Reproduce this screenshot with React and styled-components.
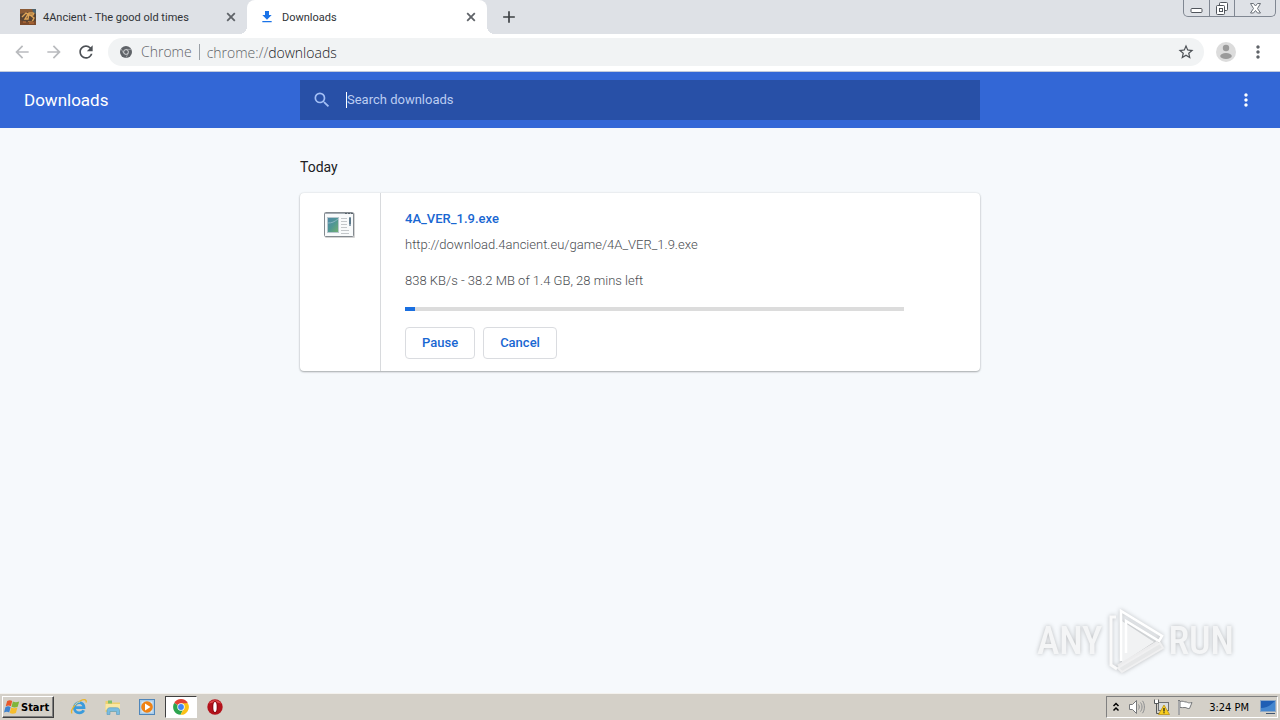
import React from "react";
import styled, { createGlobalStyle } from "styled-components";
import {
  MdAdd,
  MdArrowBack,
  MdArrowForward,
  MdFileDownload,
  MdMoreVert,
  MdRefresh,
  MdSearch,
  MdStarBorder,
} from "react-icons/md";

const download = {
  name: "4A_VER_1.9.exe",
  url: "http://download.4ancient.eu/game/4A_VER_1.9.exe",
  status: "838 KB/s - 38.2 MB of 1.4 GB, 28 mins left",
  percent: 2,
};

const GameFavicon = () => (
  <svg width="16" height="16" viewBox="0 0 16 16" aria-hidden="true">
    <rect width="16" height="16" fill="#5a4433" />
    <path d="M0 0h16v4L9 3 0 5z" fill="#8b5a35" />
    <path d="M2 8l4-4 2 1-3 5h3l1-6h5l-1 2h-3l4 3-2 4H8" stroke="#e0a557" strokeWidth="1.4" fill="none" />
    <path d="M0 11l5 2 11-1v4H0z" fill="#7c4b2b" />
    <path d="M3 13h3M9 14h5" stroke="#c9763a" />
    <path d="M12 0h4v5l-3-2z" fill="#4c6470" />
  </svg>
);

const CloseIcon = () => (
  <svg width="10" height="10" viewBox="0 0 10 10" aria-hidden="true">
    <path d="M1.2 1.2l7.600 7.600M8.800 1.200L1.200 8.800" stroke="currentColor" strokeWidth="1.800" />
  </svg>
);

const ChromeMono = () => (
  <svg width="12" height="12" viewBox="0 0 12 12" aria-hidden="true">
    <circle cx="6" cy="6" r="6" fill="#5f6368" />
    <circle cx="6" cy="6" r="2.4" fill="#5f6368" stroke="#f1f3f4" strokeWidth="0.8" />
    <path d="M6 3.400h5.200M3.700 7.300L1.200 3M8.300 7.300L5.900 11.800" stroke="#d5d7d9" strokeWidth="0.500" />
  </svg>
);

const ChromeColor = () => (
  <svg width="16" height="16" viewBox="0 0 16 16" aria-hidden="true">
    <path d="M8 8L1.2 4A7.8 7.8 0 0 1 14.8 4z" fill="#e24234" />
    <path d="M8 8L1.2 4A7.8 7.8 0 0 0 7.6 15.8L11 9z" fill="#2da44e" />
    <path d="M8 4.3h6.9A7.8 7.8 0 0 1 7.6 15.8L11 9z" fill="#fbc116" />
    <circle cx="8" cy="8" r="3.7" fill="#fff" />
    <circle cx="8" cy="8" r="2.9" fill="#4285f4" />
  </svg>
);

const ProgramIcon = () => (
  <svg width="32" height="28" viewBox="0 0 32 28" aria-hidden="true">
    <defs>
      <linearGradient id="thumb" x1="0" y1="0" x2="1" y2="1">
        <stop offset="0" stopColor="#4f86a8" />
        <stop offset="0.5" stopColor="#4f9794" />
        <stop offset="1" stopColor="#74b06c" />
      </linearGradient>
    </defs>
    <rect x="1" y="1" width="30" height="25" rx="1" fill="#d4d4d4" />
    <rect x="0.500" y="0.500" width="29" height="24" rx="1" fill="#f8fafb" stroke="#848a90" />
    <path d="M1 1.500h28" stroke="#a3abb2" />
    <path d="M21 1.500h2M24 1.500h2M27 1.500h2" stroke="#59636c" />
    <rect x="3.500" y="5.500" width="11" height="15" fill="url(#thumb)" stroke="#b8c8cf" />
    <path d="M4 11c4 0 6-1 10-4" stroke="#8bb6c2" fill="none" />
    <path d="M17 6.500h6M17 9.500h6M17 12.500h6M17 15.500h6M17 18.500h8M17 21.500h8" stroke="#c3c7ca" />
    <rect x="25" y="5" width="2" height="9" fill="#8fa3b1" />
    <path d="M26 6v6" stroke="#2d5268" />
  </svg>
);

const WindowsFlag = () => (
  <svg width="16" height="16" viewBox="0 0 16 16" aria-hidden="true">
    <path d="M3.200 2c2-1.200 3.500-1 5 0L6.900 7.300c-1.500-1-3.200-1-5.200 0z" fill="#e8582a" />
    <path d="M8.900 2.500c2 1 3.800 1 6.300 0l-1.500 5.200c-2 1-4.200 1-6.200 0z" fill="#7fb53a" />
    <path d="M1.400 8.200c2-1.200 3.700-1 5.200 0L5.200 13.500c-1.500-1-3.200-1-5.200 0z" fill="#3f83cf" />
    <path d="M7.200 8.600c2 1 4 1 6.200 0L11.900 14c-2 1-4.200 1-6.200 0z" fill="#f6bd2c" />
  </svg>
);

const ExplorerE = () => (
  <svg width="18" height="18" viewBox="0 0 18 18" aria-hidden="true">
    <path d="M4.500 9.700h9.500c0-3-2-5-4.700-5S4.300 6.800 4.300 9.800s2.200 5 5 5c2 0 3.700-1 4.400-2.600" stroke="#3a9bdc" strokeWidth="2.800" fill="none" />
    <path d="M2 15.500C0 12.500 5 5.500 10 3c4-2 7-1.800 6 1.500" stroke="#e9b52d" strokeWidth="1.300" fill="none" />
    <path d="M5 7c1-2 3-3 5-2.800" stroke="#9fd6f5" fill="none" />
  </svg>
);

const FolderIcon = () => (
  <svg width="18" height="18" viewBox="0 0 18 18" aria-hidden="true">
    <path d="M1.500 3h5l1 1.500h8.500V14H1.500z" fill="#eecf6d" />
    <path d="M4 2.500h4v3H4z" fill="#7fbf6a" />
    <path d="M1.500 6H16v6H1.500z" fill="#f9e7a3" />
    <path d="M3 16.500v-4c0-2 1.500-2.800 3-2.800h6.500c2 0 3 .8 3 2.800v4h-3v-3H6v3z" fill="#79bce0" stroke="#5799bd" strokeWidth="0.600" />
  </svg>
);

const PlayerIcon = () => (
  <svg width="18" height="18" viewBox="0 0 18 18" aria-hidden="true">
    <rect x="1.500" y="1.500" width="15" height="15" fill="#a9cbe8" stroke="#4f86ba" />
    <rect x="3.500" y="3.500" width="11" height="11" fill="#d8e9f6" />
    <circle cx="9" cy="9" r="5.800" fill="#ef8214" />
    <path d="M7 5.500l5.500 3.500L7 12.500z" fill="#fff" />
  </svg>
);

const OperaIcon = () => (
  <svg width="18" height="18" viewBox="0 0 18 18" aria-hidden="true">
    <circle cx="9" cy="9" r="7.700" fill="#b3121b" />
    <path d="M2.500 6a7.500 7.500 0 0 1 13 0c-3-2-10-2-13 0z" fill="#dd4a4a" />
    <ellipse cx="9" cy="9" rx="2.900" ry="6" fill="#8a0c12" />
    <ellipse cx="9" cy="9" rx="1.700" ry="5" fill="#fff" />
  </svg>
);

const SpeakerIcon = () => (
  <svg width="18" height="16" viewBox="0 0 18 16" aria-hidden="true">
    <path d="M1.500 5.500h3l4-4v13l-4-4h-3z" fill="#fff" stroke="#77797b" />
    <path d="M10.500 5.500c1 1.500 1 3.500 0 5M12.500 3.500c2 2.500 2 6.500 0 9M14.500 1.800c2.500 3.500 2.500 9 0 12.400" stroke="#8b8d8f" fill="none" />
  </svg>
);

const NetworkIcon = () => (
  <svg width="17" height="16" viewBox="0 0 17 16" aria-hidden="true">
    <rect x="5.500" y="3.500" width="10" height="8" fill="#d9dcdd" stroke="#6e7173" />
    <path d="M1.500.5v4h4v-4M3.500 4.500v10h4" stroke="#55585a" fill="none" />
    <rect x="2" y="1" width="3" height="3" fill="#fff" />
    <path d="M11 6l5.500 9.500h-11z" fill="#f8ce1d" stroke="#b58a0a" strokeWidth="0.700" />
    <path d="M11 9v3.500M11 13.300v1" stroke="#222" strokeWidth="1.300" />
  </svg>
);

const FlagIcon = () => (
  <svg width="17" height="16" viewBox="0 0 17 16" aria-hidden="true">
    <path d="M3 2.500c3-1 4 .5 6 .5s1 1.500 6 .5l-2.500 6c-2 .5-3-1-4.500-1s-3 .3-5 0z" fill="#fff" stroke="#77797b" />
    <path d="M2 1v14.500" stroke="#77797b" strokeWidth="2" />
    <path d="M2 2v13" stroke="#fff" strokeWidth="0.700" />
  </svg>
);

const DesktopIcon = () => (
  <svg width="16" height="16" viewBox="0 0 16 16" aria-hidden="true">
    <rect x="0.500" y="1.500" width="15" height="11" fill="#1f5fb4" stroke="#8fa9c6" />
    <path d="M1 9c5 0 9-2 14-7v10H1z" fill="#4587cf" />
    <path d="M6 14.500h9" stroke="#3f5570" />
  </svg>
);

const ChevronsUp = () => (
  <svg width="8" height="10" viewBox="0 0 8 10" aria-hidden="true">
    <path d="M1.500 4L4 1.500 6.500 4M1.500 8.500L4 6l2.500 2.500" stroke="#000" strokeWidth="1.500" fill="none" />
  </svg>
);

const PlayMark = () => (
  <svg width="60" height="68" viewBox="0 0 60 68" aria-hidden="true">
    <path d="M17 14l32 21-32 21z" fill="#f1f2f3" />
    <path d="M11 10H6v48l6 4" stroke="#fafafa" strokeWidth="3" fill="none" />
    <path d="M16 54V4l41 25-3 5-33-20v32" stroke="#fff" strokeWidth="2.500" fill="none" />
    <path d="M13 59l40-24" stroke="#ececed" strokeWidth="3" />
    <path d="M17 65l41-24-3-5-42 25z" stroke="#f0f0f1" strokeWidth="2" fill="#e6e7e8" />
  </svg>
);

function App() {
  return (
    <>
      <GlobalStyle />
      <Screen>
        <TabStrip>
          <Tab>
            <GameFavicon />
            <TabTitle>4Ancient - The good old times</TabTitle>
            <TabClose aria-label="Close tab">
              <CloseIcon />
            </TabClose>
          </Tab>
          <Tab $active>
            <DownloadIcon />
            <TabTitle>Downloads</TabTitle>
            <TabClose aria-label="Close tab">
              <CloseIcon />
            </TabClose>
          </Tab>
          <NewTab aria-label="New tab">
            <MdAdd />
          </NewTab>
          <WindowControls>
            <WindowButton aria-label="Minimize">
              <svg width="13" height="14" viewBox="0 0 13 14">
                <rect x="1" y="8.500" width="11" height="4" rx="1" fill="#fff" stroke="#50555c" />
              </svg>
            </WindowButton>
            <WindowButton aria-label="Restore">
              <svg width="14" height="16" viewBox="0 0 14 16">
                <rect x="4.500" y="2.500" width="8" height="8" rx="1" fill="#fff" stroke="#50555c" />
                <rect x="1.500" y="5.500" width="8" height="9" rx="1" fill="#fff" stroke="#50555c" />
                <rect x="4.500" y="8.500" width="3" height="3" fill="none" stroke="#50555c" />
              </svg>
            </WindowButton>
            <WindowButton $wide aria-label="Close">
              <svg width="13" height="16" viewBox="0 0 13 16">
                <path
                  d="M1.500 3.500h3l2 2.500 2-2.500h3L8.500 8.500l3 4.500h-3l-2-2.500-2 2.500h-3l3-4.500z"
                  fill="#fff"
                  stroke="#6b7178"
                />
              </svg>
            </WindowButton>
          </WindowControls>
        </TabStrip>

        <Toolbar>
          <NavButton $muted aria-label="Back">
            <MdArrowBack />
          </NavButton>
          <NavButton $muted aria-label="Forward">
            <MdArrowForward />
          </NavButton>
          <NavButton aria-label="Reload">
            <MdRefresh />
          </NavButton>
          <AddressBar>
            <ChromeMono />
            <SiteName>Chrome</SiteName>
            <Address>
              chrome://<b>downloads</b>
            </Address>
            <StarButton aria-label="Bookmark this page">
              <MdStarBorder />
            </StarButton>
          </AddressBar>
          <Avatar aria-label="Profile">
            <svg width="20" height="20" viewBox="0 0 20 20">
              <circle cx="10" cy="10" r="10" fill="#dcdcdc" />
              <circle cx="10" cy="6" r="3.200" fill="#9a9a9a" />
              <ellipse cx="10" cy="14" rx="5.800" ry="3" fill="#9a9a9a" />
            </svg>
          </Avatar>
          <MenuButton aria-label="Customize and control">
            <MdMoreVert />
          </MenuButton>
        </Toolbar>

        <PageHeader>
          <PageTitle>Downloads</PageTitle>
          <SearchBox>
            <MdSearch />
            <SearchInput type="text" aria-label="Search downloads" placeholder="Search downloads" />
          </SearchBox>
          <ActionsButton aria-label="More actions">
            <MdMoreVert />
          </ActionsButton>
        </PageHeader>

        <Content>
          <DayHeading>Today</DayHeading>
          <Card>
            <IconColumn>
              <ProgramIcon />
            </IconColumn>
            <Details>
              <FileName href="#">{download.name}</FileName>
              <FileUrl>{download.url}</FileUrl>
              <Status>{download.status}</Status>
              <ProgressTrack
                role="progressbar"
                aria-label="Download progress"
                aria-valuenow={download.percent}
              >
                <ProgressBar style={{ width: `${download.percent}%` }} />
              </ProgressTrack>
              <Actions>
                <ActionButton>Pause</ActionButton>
                <ActionButton>Cancel</ActionButton>
              </Actions>
            </Details>
          </Card>
          <Watermark>
            <span>ANY</span>
            <PlayMark />
            <span>RUN</span>
          </Watermark>
        </Content>

        <Taskbar>
          <StartButton>
            <WindowsFlag />
            Start
          </StartButton>
          <QuickLaunch>
            <TaskButton aria-label="Internet Explorer">
              <ExplorerE />
            </TaskButton>
            <TaskButton aria-label="Windows Explorer">
              <FolderIcon />
            </TaskButton>
            <TaskButton aria-label="Media Player">
              <PlayerIcon />
            </TaskButton>
            <TaskButton $pressed aria-label="Chrome">
              <ChromeColor />
            </TaskButton>
            <TaskButton aria-label="Opera">
              <OperaIcon />
            </TaskButton>
          </QuickLaunch>
          <Tray>
            <ChevronsUp />
            <TrayIcons>
              <SpeakerIcon />
              <NetworkIcon />
              <FlagIcon />
            </TrayIcons>
            <Clock>3:24 PM</Clock>
            <DesktopIcon />
          </Tray>
        </Taskbar>
      </Screen>
    </>
  );
}

const GlobalStyle = createGlobalStyle`
  * {
    box-sizing: border-box;
  }
  body {
    margin: 0;
    font-family: Roboto, "Liberation Sans", sans-serif;
    font-size: 13px;
  }
  button {
    padding: 0;
    border: none;
    background: none;
    font-family: inherit;
  }
  svg {
    display: block;
    flex-shrink: 0;
  }
`;

const Screen = styled.div`
  display: flex;
  flex-direction: column;
  min-height: 100vh;
  background-color: #f6f9fc;
`;

const TabStrip = styled.div`
  display: flex;
  height: 34px;
  background-color: #dee1e6;
`;

const Tab = styled.div`
  position: relative;
  display: flex;
  align-items: center;
  width: ${({ $active }) => ($active ? "240px" : "247px")};
  padding: 0 11px 0 ${({ $active }) => ($active ? "12px" : "20px")};
  gap: 7px;
  border-radius: 8px 8px 0 0;
  background-color: ${({ $active }) => ($active ? "#fff" : "transparent")};
  color: #303336;
  &::before,
  &::after {
    content: "";
    display: ${({ $active }) => ($active ? "block" : "none")};
    position: absolute;
    bottom: 0;
    width: 8px;
    height: 8px;
  }
  &::before {
    left: -8px;
    background: radial-gradient(circle at 0 0, transparent 8px, #fff 8px);
  }
  &::after {
    right: -8px;
    background: radial-gradient(circle at 100% 0, transparent 8px, #fff 8px);
  }
`;

const TabTitle = styled.span`
  flex: 1;
  font-size: 11px;
  white-space: nowrap;
`;

const TabClose = styled.button`
  display: flex;
  color: #5f6368;
`;

const DownloadIcon = styled(MdFileDownload)`
  color: #1a73e8;
  font-size: 16px;
`;

const NewTab = styled.button`
  display: flex;
  align-items: center;
  margin-left: 12px;
  color: #3c4043;
  font-size: 20px;
`;

const WindowControls = styled.div`
  display: flex;
  height: 17px;
  margin: 0 4px 0 auto;
  border: 1px solid #808792;
  border-top: none;
  border-radius: 0 0 5px 5px;
`;

const WindowButton = styled.button`
  display: flex;
  justify-content: center;
  width: ${({ $wide }) => ($wide ? "41px" : "25px")};
  & + & {
    border-left: 1px solid #808792;
  }
`;

const Toolbar = styled.div`
  display: flex;
  align-items: center;
  height: 38px;
  padding: 0 12px 1px;
  border-bottom: 1px solid #c3cbdc;
  background-color: #fff;
`;

const NavButton = styled.button`
  display: flex;
  justify-content: center;
  width: 20px;
  margin-right: 12px;
  color: ${({ $muted }) => ($muted ? "#b9bbbe" : "#4d5156")};
  font-size: 20px;
`;

const AddressBar = styled.div`
  display: flex;
  flex: 1;
  align-items: center;
  height: 28px;
  padding: 0 9px 0 12px;
  border-radius: 14px;
  background-color: #f1f3f4;
  color: #5f6368;
  font-family: "Open Sans", "Noto Sans", sans-serif;
  font-size: 14px;
  font-weight: 300;
`;

const SiteName = styled.span`
  margin-left: 9px;
  padding-right: 7px;
  border-right: 1px solid #9aa0a6;
  line-height: 16px;
`;

const Address = styled.span`
  flex: 1;
  margin-left: 7px;
  b {
    color: #202124;
    font-weight: 300;
  }
`;

const StarButton = styled.button`
  display: flex;
  color: #4d5156;
  font-size: 18px;
`;

const Avatar = styled.button`
  margin: 0 12px;
`;

const MenuButton = styled.button`
  display: flex;
  color: #5f6368;
  font-size: 20px;
`;

const PageHeader = styled.header`
  display: grid;
  grid-template-columns: 1fr minmax(0, 680px) 1fr;
  align-items: center;
  height: 56px;
  padding: 0 24px;
  background-color: #3367d6;
  color: #fff;
`;

const PageTitle = styled.h1`
  margin: 0;
  font-size: 17px;
  font-weight: 400;
`;

const SearchBox = styled.div`
  display: flex;
  align-items: center;
  gap: 14px;
  height: 40px;
  padding: 0 12px;
  background-color: #2850a7;
  color: #a3bff5;
  font-size: 20px;
`;

const SearchInput = styled.input`
  flex: 1;
  height: 16px;
  padding: 0 0 1px;
  border: none;
  border-left: 1px solid #fff;
  outline: none;
  background: none;
  color: #fff;
  font-family: inherit;
  font-size: 13px;
  &::placeholder {
    color: #bccdf2;
    opacity: 1;
  }
`;

const ActionsButton = styled.button`
  display: flex;
  justify-self: end;
  color: #fff;
  font-size: 20px;
`;

const Content = styled.main`
  position: relative;
  flex: 1;
  padding: 28px 24px;
`;

const DayHeading = styled.h2`
  max-width: 680px;
  margin: 0 auto 15px;
  color: #202124;
  font-size: 14px;
  font-weight: 400;
  line-height: 22px;
`;

const Card = styled.div`
  display: flex;
  max-width: 680px;
  margin: 0 auto;
  border-radius: 4px;
  background-color: #fff;
  box-shadow: 0 1px 2px rgba(60, 64, 67, 0.4), 0 0 2px rgba(60, 64, 67, 0.15);
`;

const IconColumn = styled.div`
  display: flex;
  justify-content: center;
  width: 81px;
  padding-top: 19px;
  border-right: 1px solid #d8dadd;
`;

const Details = styled.div`
  display: flex;
  flex: 1;
  flex-direction: column;
  padding: 16px 76px 12px 24px;
  color: #4a4d51;
  font-weight: 300;
  line-height: 20px;
`;

const FileName = styled.a`
  align-self: flex-start;
  color: #1967d2;
  font-weight: 500;
  text-decoration: none;
`;

const FileUrl = styled.span`
  margin-top: 6px;
`;

const Status = styled.span`
  margin-top: 16px;
`;

const ProgressTrack = styled.div`
  height: 4px;
  margin: 16px 0;
  background-color: #dcdcdc;
`;

const ProgressBar = styled.div`
  height: 100%;
  background-color: #1a6fe0;
`;

const Actions = styled.div`
  display: flex;
  gap: 8px;
`;

const ActionButton = styled.button`
  height: 32px;
  padding: 0 16px 2px;
  border: 1px solid #dadce0;
  border-radius: 4px;
  color: #1967d2;
  font-size: 13px;
  font-weight: 500;
`;

const Watermark = styled.div`
  position: absolute;
  right: 46px;
  bottom: 18px;
  display: flex;
  align-items: center;
  gap: 3px;
  filter: drop-shadow(0 0 2px rgba(0, 0, 0, 0.25));
  color: #f4f5f6;
  font-family: "Roboto Condensed", "Liberation Sans Narrow", sans-serif;
  font-size: 38px;
  font-weight: 500;
`;

const Taskbar = styled.footer`
  display: flex;
  align-items: center;
  height: 27px;
  padding: 0 2px;
  border-top: 1px solid #f4f2ee;
  background-color: #d4d0c8;
  font-family: "DejaVu Sans Condensed", "DejaVu Sans", sans-serif;
`;

const StartButton = styled.button`
  display: flex;
  align-items: center;
  gap: 1px;
  height: 22px;
  padding: 0 4px 0 1px;
  border: 1px solid;
  border-color: #fff #404040 #404040 #fff;
  box-shadow: inset -1px -1px 0 #808080;
  background-color: #d4d0c8;
  color: #000;
  font-size: 11px;
  font-weight: bold;
`;

const QuickLaunch = styled.div`
  display: flex;
  margin-left: 9px;
  gap: 2px;
`;

const TaskButton = styled.button`
  display: flex;
  align-items: center;
  justify-content: center;
  width: 32px;
  height: 22px;
  border: ${({ $pressed }) => ($pressed ? "1px solid" : "none")};
  border-color: #404040 #fff #fff #404040;
  background-color: ${({ $pressed }) => ($pressed ? "#fff" : "transparent")};
`;

const Tray = styled.div`
  display: flex;
  align-items: center;
  height: 22px;
  margin-left: auto;
  padding: 0 1px 0 5px;
  border: 1px solid;
  border-color: #808080 #fff #fff #808080;
`;

const TrayIcons = styled.div`
  display: flex;
  gap: 7px;
  margin-left: 8px;
`;

const Clock = styled.span`
  margin: 0 11px 0 15px;
  color: #000;
  font-size: 11px;
`;

export default App;
